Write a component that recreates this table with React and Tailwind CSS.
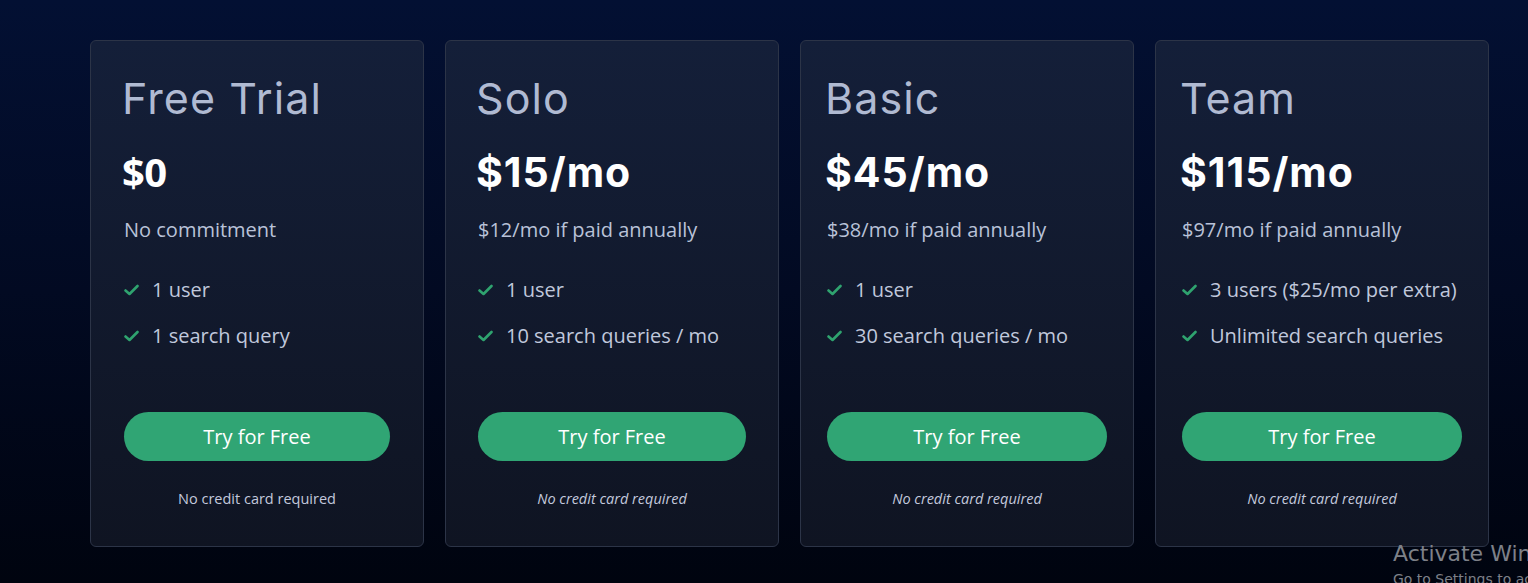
import React from "react";

const plans = [
  { name: "Free Trial", price: "$0", sub: "No commitment", features: ["1 user", "1 search query"], italic: false, pad: "px-[33px]", priceFont: "font-['Open_Sans',sans-serif] text-[40px] tracking-[-0.5px]" },
  { name: "Solo", price: "$15/mo", sub: "$12/mo if paid annually", features: ["1 user", "10 search queries / mo"], italic: true, pad: "px-[32px]", priceFont: "font-['Inter',sans-serif] text-[41px] tracking-[1px]" },
  { name: "Basic", price: "$45/mo", sub: "$38/mo if paid annually", features: ["1 user", "30 search queries / mo"], italic: true, pad: "px-[26px]", priceFont: "font-['Inter',sans-serif] text-[41px] tracking-[1px]" },
  { name: "Team", price: "$115/mo", sub: "$97/mo if paid annually", features: ["3 users ($25/mo per extra)", "Unlimited search queries"], italic: true, pad: "px-[26px]", priceFont: "font-['Inter',sans-serif] text-[41px] tracking-[1px]" },
];

function Check() {
  return (
    <svg width="15" height="14" viewBox="0 0 15 14" className="shrink-0">
      <polyline points="1.5,7.5 5.5,11 13.5,3" fill="none" stroke="#2fa36f" strokeWidth="2.6" strokeLinecap="round" strokeLinejoin="round" />
    </svg>
  );
}

function Card({ p }) {
  return (
    <div className={`w-[334px] h-[507px] shrink-0 rounded-[6px] border border-[#2c3447] bg-gradient-to-b from-[#141f39] to-[#0f1422] ${p.pad} pt-[32px] flex flex-col`}>
      <div className="font-['Inter',sans-serif] text-[43px] leading-[50px] text-[#b0bad2] tracking-[1.1px] -ml-[2px]">{p.name}</div>
      <div className={`${p.priceFont} mt-[26px] leading-[46px] font-bold text-white -ml-[2px]`}>{p.price}</div>
      <div className="mt-[21px] text-[20px] leading-[28px] text-[#b9c2d8]">{p.sub}</div>
      <div className="mt-[32px] flex flex-col gap-[18px]">
        {p.features.map((f) => (
          <div key={f} className="flex items-center gap-[13px] text-[20px] leading-[28px] text-[#c0c8dc]">
            <Check />
            <span>{f}</span>
          </div>
        ))}
      </div>
      <button className="mt-[62px] h-[49px] w-full rounded-full bg-[#30a574] text-white text-[20px]">Try for Free</button>
      <div className={`mt-[27px] text-center text-[14.5px] leading-[22px] text-[#c3c9dd] ${p.italic ? "italic" : ""}`}>No credit card required</div>
    </div>
  );
}

export default function App() {
  return (
    <div className="relative w-[1528px] h-[583px] overflow-hidden bg-gradient-to-b from-[#031033] via-[#020a22] to-[#00040f] font-['Open_Sans',sans-serif]">
      <div className="flex gap-[21px] pl-[90px] pt-[40px]">
        {plans.map((p) => (
          <Card key={p.name} p={p} />
        ))}
      </div>
      <div className="absolute left-[1393px] top-[539px] whitespace-nowrap font-['DejaVu_Sans',sans-serif] text-[#7d8088]">
        <div className="text-[22px] leading-[30px]">Activate Windows</div>
        <div className="text-[14px] leading-[20px]">Go to Settings to activate Windows.</div>
      </div>
    </div>
  );
}
